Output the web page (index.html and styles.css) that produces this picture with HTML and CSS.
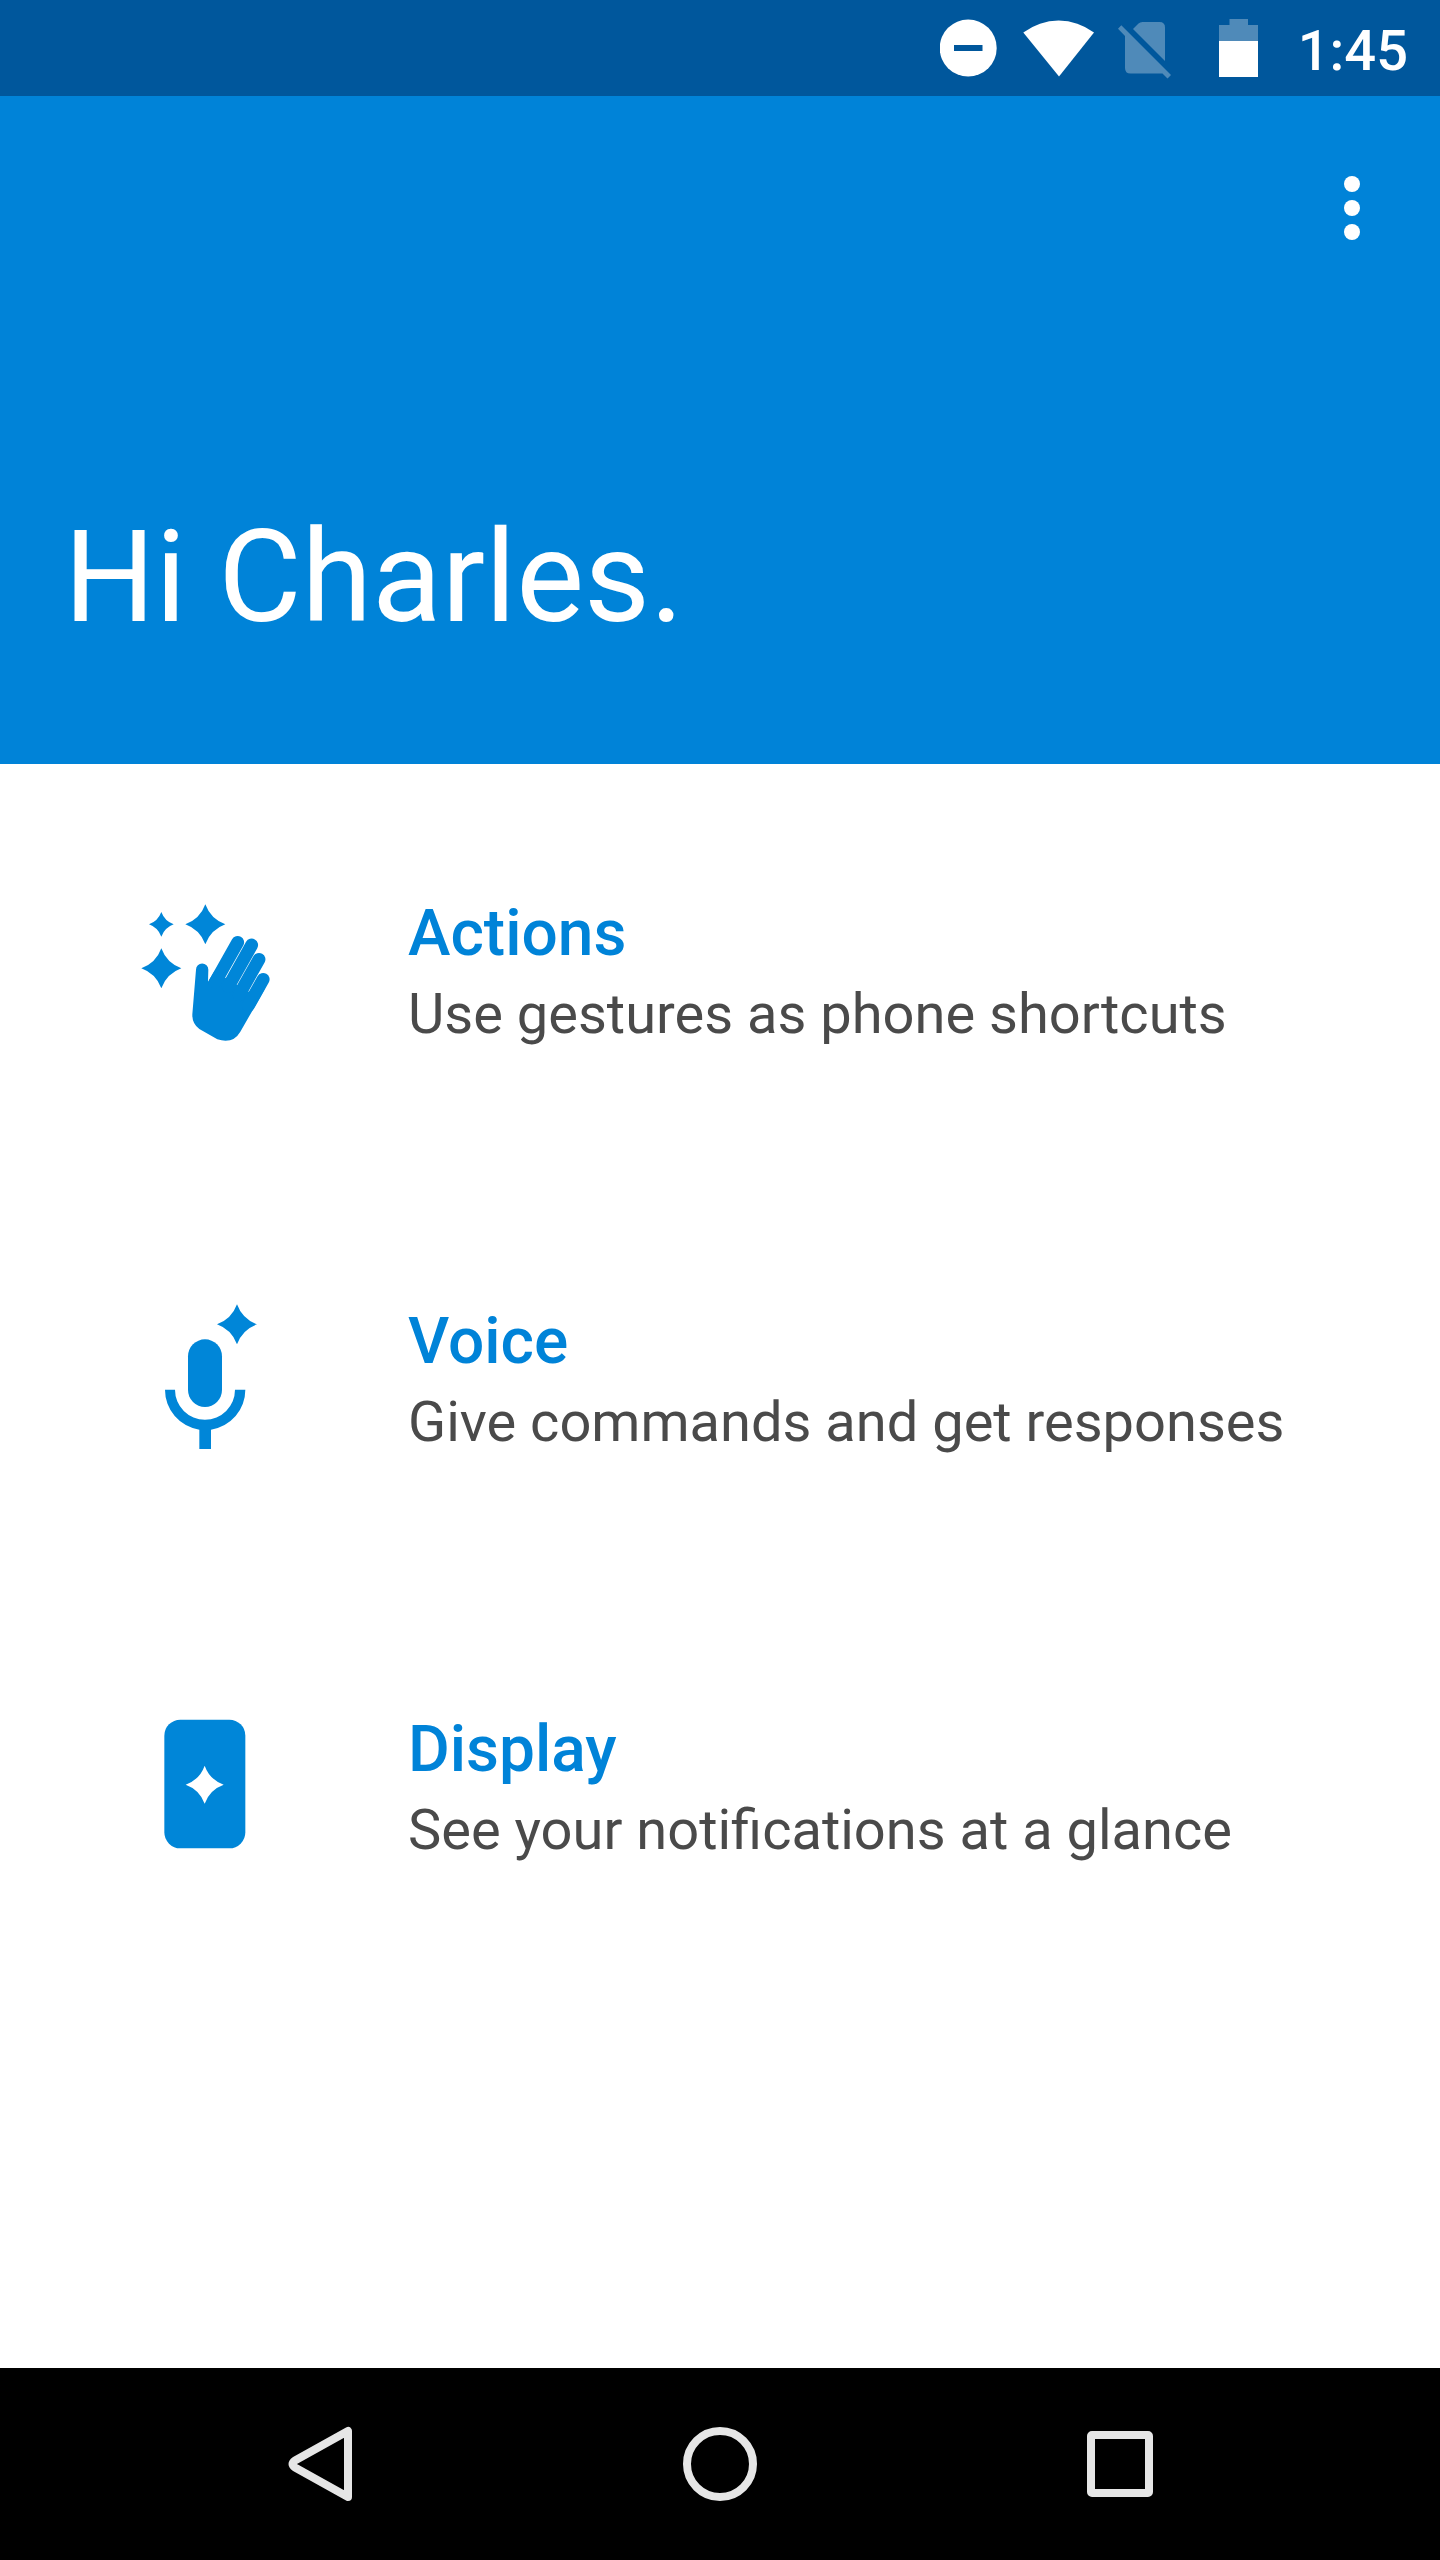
FILE: index.html
```html
<!DOCTYPE html>
<html lang="en">
<head>
  <meta charset="UTF-8">
  <title>Moto</title>
  <link rel="stylesheet" href="styles.css">
</head>
<body>
  <div class="status-bar">
    <svg class="status-icons" viewBox="968 0 340 96" width="340" height="96">
      <!-- do not disturb -->
      <circle cx="996.2" cy="48" r="28.5" fill="#fff"/>
      <rect x="982" y="45" width="28.5" height="6" fill="#00579c"/>
      <!-- wifi -->
      <path d="M1087 76.5 L1051.3 32.5 A58.5 58.5 0 0 1 1122 32.5 Z" fill="#fff"/>
      <!-- no sim -->
      <g class="dim">
        <path d="M1161 29 L1166.5 23.5 Q1168 22 1170.500 22 H1187.500 Q1193 22 1193 27.500 V61 Z"/>
        <path d="M1149.300 25.300 L1199 75 L1195.500 78.500 L1190.500 73.500 H1158.500 Q1153 73.500 1153 68 V36 L1146 28.800 Z"/>
      </g>
      <!-- battery -->
      <path class="dim" d="M1247 41 V25 H1257.500 V19 H1276 V25 H1286 V41 Z"/>
      <rect x="1247" y="41" width="39" height="36" fill="#fff"/>
    </svg>
    <span class="clock">1:45</span>
  </div>

  <header class="header">
    <svg class="menu" viewBox="0 0 16 64" width="16" height="64">
      <circle cx="8" cy="8" r="8"/>
      <circle cx="8" cy="32" r="8"/>
      <circle cx="8" cy="56" r="8"/>
    </svg>
    <h1>Hi Charles.</h1>
  </header>

  <main class="list">
    <div class="item">
      <svg class="icon" viewBox="0 0 480 510">
        <path d="M124 66 Q134 93 161 103 Q134 113 124 140 Q114 113 87 103 Q114 93 124 66 Z"/>
        <path d="M256 43 Q272 87 316 103 Q272 119 256 163 Q240 119 196 103 Q240 87 256 43 Z"/>
        <path d="M124 175 Q140 219 184 235 Q140 251 124 295 Q108 251 64 235 Q108 219 124 175 Z"/>
        <!-- palm and thumb -->
        <path d="M228 239 A18.500 18.500 0 0 1 265 239 L264 275 L284 242 L317 264 L350 284 L384 305 L434 298 L361 425 Q339 463 292 448 L238 417 Q216 401 217 373 Z"/>
        <path class="fingers" d="M353 157 L285 278 M395 165 L325 290 M417 208 L357 315 M429.500 268 L385 347"/>
      </svg>
      <div class="text">
        <h2>Actions</h2>
        <p>Use gestures as phone shortcuts</p>
      </div>
    </div>

    <div class="item">
      <svg class="icon" viewBox="0 0 480 510">
        <path d="M351 19 Q367 63 411 79 Q367 95 351 139 Q335 95 291 79 Q335 63 351 19 Z"/>
        <rect x="204" y="124" width="102" height="203" rx="51"/>
        <path d="M135 275 H165 A90 90 0 0 0 345 275 H376 A121 121 0 0 1 273 395 V453 H238 V395 A121 121 0 0 1 135 275 Z"/>
      </svg>
      <div class="text">
        <h2>Voice</h2>
        <p>Give commands and get responses</p>
      </div>
    </div>

    <div class="item">
      <svg class="icon" viewBox="0 0 480 510">
        <rect x="133" y="41" width="243" height="386" rx="48"/>
        <path d="M254 179 Q269 221 311 236 Q269 251 254 293 Q239 251 197 236 Q239 221 254 179 Z" fill="#fff"/>
      </svg>
      <div class="text">
        <h2>Display</h2>
        <p>See your notifications at a glance</p>
      </div>
    </div>
  </main>

  <nav class="nav-bar">
    <svg viewBox="0 0 80 80"><path d="M68 7 V73 L15 43.500 Q10 40 15 36.500 Z"/></svg>
    <svg viewBox="0 0 80 80"><circle cx="40" cy="40" r="33"/></svg>
    <svg viewBox="0 0 80 80"><rect x="11" y="11" width="58" height="58" rx="1"/></svg>
  </nav>
</body>
</html>
```

FILE: styles.css
```css
* {
  box-sizing: border-box;
}
body {
  margin: 0;
  width: 1440px;
  height: 2560px;
  display: flex;
  flex-direction: column;
  background-color: #fff;
  font-family: Roboto, sans-serif;
}
h1, h2, p {
  margin: 0;
}
svg {
  display: block;
}
.status-bar {
  height: 96px;
  padding-right: 32px;
  display: flex;
  justify-content: flex-end;
  background-color: #00579c;
  color: #fff;
}
.status-icons {
  margin-right: 18px;
}
.dim {
  fill: #4f8ab9;
}
.clock {
  font-size: 56px;
  font-weight: 500;
  line-height: 66px;
  padding-top: 18px;
}
.header {
  height: 668px;
  padding: 80px 80px 112px 64px;
  display: flex;
  flex-direction: column;
  justify-content: space-between;
  background-color: #0083d8;
  color: #fff;
}
.menu {
  align-self: flex-end;
  fill: #fff;
}
h1 {
  font-size: 128px;
  font-weight: 400;
  line-height: 150px;
}
.list {
  flex: 1;
}
.item {
  height: 408px;
  padding: 126px 0 0 120px;
  display: flex;
  align-items: flex-start;
  gap: 128px;
}
.icon {
  width: 160px;
  height: 170px;
  fill: #0086d8;
}
.fingers {
  fill: none;
  stroke: #0086d8;
  stroke-width: 38.5;
  stroke-linecap: round;
}
.text {
  padding-top: 6px;
}
h2 {
  font-size: 64px;
  font-weight: 500;
  line-height: 75px;
  color: #0083d8;
}
p {
  margin-top: 10px;
  font-size: 56px;
  line-height: 66px;
  color: #4a4a4a;
}
.nav-bar {
  height: 192px;
  display: flex;
  justify-content: center;
  align-items: center;
  gap: 320px;
  background-color: #000;
}
.nav-bar svg {
  width: 80px;
  height: 80px;
  fill: none;
  stroke: #e6e6e6;
  stroke-width: 8;
  stroke-linejoin: round;
}
```
